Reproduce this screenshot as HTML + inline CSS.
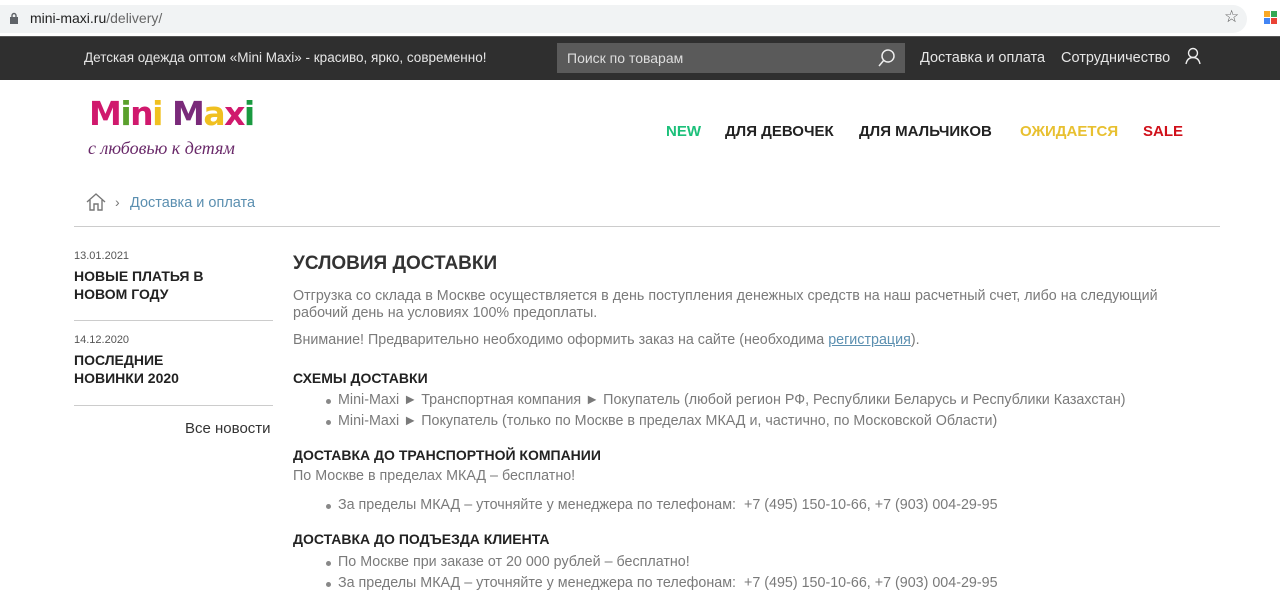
<!DOCTYPE html>
<html><head><meta charset="utf-8"><style>
*{margin:0;padding:0;box-sizing:border-box}
body{width:1280px;height:599px;overflow:hidden;background:#fff;font-family:"Liberation Sans","DejaVu Sans",sans-serif;position:relative}
.a{position:absolute}
.url{left:0;top:5px;width:1247px;height:28px;background:#f1f3f4;border-radius:0 14px 14px 0}
.top{left:0;top:36px;width:1280px;height:44px;background:#2f2f2f;border-top:1px solid #555}
.wt{color:#e6e6e6;font-size:13.5px}
.nav{font-size:15px;font-weight:bold;color:#222;top:123px}
.g{color:#7a7a7a;font-size:14.3px}
h3{font-size:14px;color:#222;font-weight:bold}
.li{color:#7a7a7a;font-size:14.3px;left:320px}
.li:before{content:"";position:absolute;left:-12px;top:7px;width:5px;height:5px;border-radius:50%;background:#888}
</style></head><body>
<div class="a url"></div>
<svg class="a" style="left:9px;top:12px" width="10" height="12"><rect x="1" y="5" width="8" height="7" fill="#5f6368"/><path d="M3 5V3.5a2 2 0 0 1 4 0V5" stroke="#5f6368" stroke-width="1.4" fill="none"/></svg>
<div class="a" style="left:30px;top:10px;font-size:14px;color:#222">mini-maxi.ru<span style="color:#666">/delivery/</span></div>
<div class="a" style="left:1224px;top:7px;font-size:17px;color:#555">☆</div>
<div class="a" style="left:1264px;top:11px;width:6px;height:6px;background:#f9a825"></div><div class="a" style="left:1271px;top:11px;width:6px;height:6px;background:#34a853"></div>
<div class="a" style="left:1264px;top:18px;width:6px;height:6px;background:#4285f4"></div><div class="a" style="left:1271px;top:18px;width:6px;height:6px;background:#ea4335"></div>
<div class="a top"></div>
<div class="a wt" style="left:84px;top:50px">Детская одежда оптом «Mini Maxi» - красиво, ярко, современно!</div>
<div class="a" style="left:557px;top:43px;width:348px;height:30px;background:#5a5a5a"></div>
<div class="a" style="left:567px;top:50px;font-size:14px;color:#ddd">Поиск по товарам</div>
<svg class="a" style="left:877px;top:48px" width="20" height="20"><circle cx="11" cy="8" r="6" stroke="#eee" stroke-width="1.5" fill="none"/><path d="M7 12L2 18" stroke="#eee" stroke-width="1.5"/></svg>
<div class="a wt" style="left:920px;top:50px;font-size:14.5px">Доставка и оплата</div>
<div class="a wt" style="left:1061px;top:50px;font-size:14.5px">Сотрудничество</div>
<svg class="a" style="left:1185px;top:47px" width="16" height="18"><circle cx="8" cy="6" r="4.5" stroke="#eee" stroke-width="1.4" fill="none"/><path d="M1 17C2 12 5 10.5 8 10.5S14 12 15 17" stroke="#eee" stroke-width="1.4" fill="none"/></svg>
<div class="a" style="left:89px;top:94px;font-size:33px;font-weight:bold;letter-spacing:-1.5px;font-family:'DejaVu Sans',sans-serif"><span style="color:#d0196d">M</span><span style="color:#5aa02c">i</span><span style="color:#d0196d">n</span><span style="color:#f0c020">i</span> <span style="color:#7a2a7a">M</span><span style="color:#f0c020">a</span><span style="color:#d0196d">x</span><span style="color:#1a9a40">i</span></div>
<div class="a" style="left:88px;top:138px;font-size:18px;font-style:italic;color:#6a2a6a;font-family:'Liberation Serif',serif">с любовью к детям</div>
<div class="a nav" style="left:666px;color:#1cc07a">NEW</div>
<div class="a nav" style="left:725px">ДЛЯ ДЕВОЧЕК</div>
<div class="a nav" style="left:859px">ДЛЯ МАЛЬЧИКОВ</div>
<div class="a nav" style="left:1020px;color:#e8c030">ОЖИДАЕТСЯ</div>
<div class="a nav" style="left:1143px;color:#d0101a">SALE</div>
<svg class="a" style="left:86px;top:192px" width="20" height="19"><path d="M1 10L10 2L19 10M4 8V18H8V12H12V18H16V8" stroke="#777" stroke-width="1.4" fill="none"/></svg>
<div class="a" style="left:115px;top:194px;color:#777;font-size:14px">›</div>
<div class="a" style="left:130px;top:195px;color:#5b8fb0;font-size:14.5px">Доставка и оплата</div>
<div class="a" style="left:74px;top:226px;width:1146px;height:1px;background:#ccc"></div>
<div class="a" style="left:74px;top:250px;font-size:11px;color:#555">13.01.2021</div>
<div class="a" style="left:74px;top:267px;line-height:18px"><h3>НОВЫЕ ПЛАТЬЯ В<br>НОВОМ ГОДУ</h3></div>
<div class="a" style="left:74px;top:320px;width:199px;height:1px;background:#ccc"></div>
<div class="a" style="left:74px;top:334px;font-size:11px;color:#555">14.12.2020</div>
<div class="a" style="left:74px;top:351px;line-height:18px"><h3>ПОСЛЕДНИЕ<br>НОВИНКИ 2020</h3></div>
<div class="a" style="left:74px;top:405px;width:199px;height:1px;background:#ccc"></div>
<div class="a" style="left:185px;top:420px;font-size:15px;color:#333">Все новости</div>
<div class="a" style="left:293px;top:253px;font-size:19px;font-weight:bold;color:#333">УСЛОВИЯ ДОСТАВКИ</div>
<div class="a g" style="left:293px;top:288px;width:900px;line-height:17px">Отгрузка со склада в Москве осуществляется в день поступления денежных средств на наш расчетный счет, либо на следующий рабочий день на условиях 100% предоплаты.</div>
<div class="a g" style="left:293px;top:332px">Внимание! Предварительно необходимо оформить заказ на сайте (необходима <span style="color:#5b8fb0;text-decoration:underline">регистрация</span>).</div>
<div class="a" style="left:293px;top:370px"><h3>СХЕМЫ ДОСТАВКИ</h3></div>
<div class="a li" style="left:338px;top:392px">Mini-Maxi ► Транспортная компания ► Покупатель (любой регион РФ, Республики Беларусь и Республики Казахстан)</div>
<div class="a li" style="left:338px;top:413px">Mini-Maxi ► Покупатель (только по Москве в пределах МКАД и, частично, по Московской Области)</div>
<div class="a" style="left:293px;top:447px"><h3>ДОСТАВКА ДО ТРАНСПОРТНОЙ КОМПАНИИ</h3></div>
<div class="a g" style="left:293px;top:468px">По Москве в пределах МКАД – бесплатно!</div>
<div class="a li" style="left:338px;top:497px">За пределы МКАД – уточняйте у менеджера по телефонам:&nbsp; +7 (495) 150-10-66, +7 (903) 004-29-95</div>
<div class="a" style="left:293px;top:531px"><h3>ДОСТАВКА ДО ПОДЪЕЗДА КЛИЕНТА</h3></div>
<div class="a li" style="left:338px;top:554px">По Москве при заказе от 20 000 рублей – бесплатно!</div>
<div class="a li" style="left:338px;top:575px">За пределы МКАД – уточняйте у менеджера по телефонам:&nbsp; +7 (495) 150-10-66, +7 (903) 004-29-95</div>
</body></html>
